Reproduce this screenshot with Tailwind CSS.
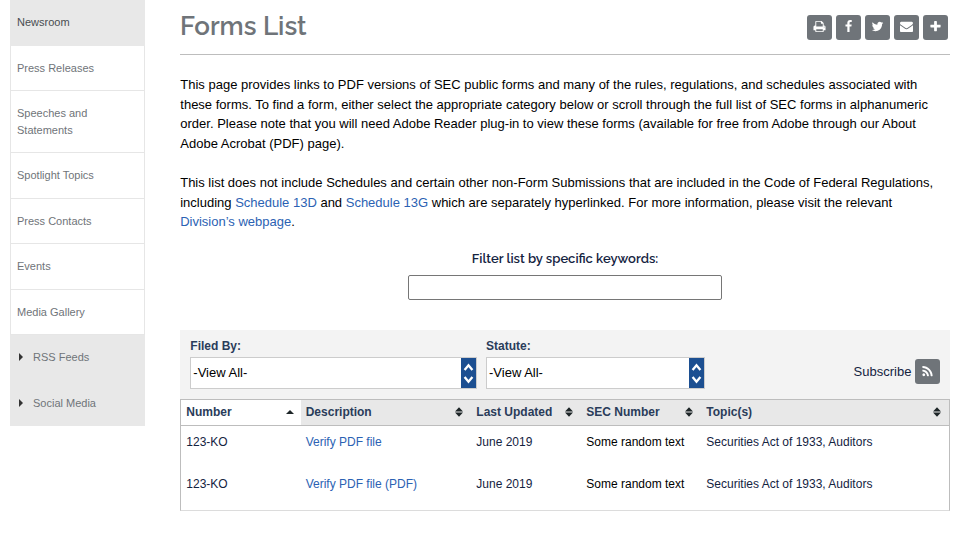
<!DOCTYPE html>
<html lang="en">
<head>
<meta charset="utf-8">
<title>Forms List</title>
<script src="https://cdn.jsdelivr.net/npm/@tailwindcss/browser@4"></script>
</head>
<body class="bg-white text-black font-['Liberation_Sans',Arial,sans-serif] text-[13px] leading-[19.5px] h-[551px] overflow-hidden">
<svg class="hidden">
  <symbol id="print" viewBox="0 0 1792 1792"><path d="M448 1536h896v-256h-896v256zm0-640h896v-384h-160q-40 0-68-28t-28-68v-160h-640v640zm1152 64q0-26-19-45t-45-19-45 19-19 45 19 45 45 19 45-19 19-45zm128 0v416q0 13-9.5 22.5t-22.5 9.5h-224v160q0 40-28 68t-68 28h-960q-40 0-68-28t-28-68v-160h-224q-13 0-22.5-9.5t-9.5-22.5v-416q0-79 56.5-135.5t135.5-56.5h64v-544q0-40 28-68t68-28h672q40 0 88 20t76 48l152 152q28 28 48 76t20 88v256h64q79 0 135.5 56.5t56.5 135.5z"/></symbol>
  <symbol id="facebook" viewBox="0 0 1792 1792"><path d="M1343 12v264h-157q-86 0-116 36t-30 108v189h293l-39 296h-254v759h-306v-759h-255v-296h255v-218q0-186 104-288.5t277-102.5q147 0 228 12z"/></symbol>
  <symbol id="twitter" viewBox="0 0 1792 1792"><path d="M1684 408q-67 98-162 167 1 14 1 42 0 130-38 259.5t-115.5 248.5-184.5 210.5-258 146-323 54.5q-271 0-496-145 35 4 78 4 225 0 401-138-105-2-188-64.5t-114-159.5q33 5 61 5 43 0 85-11-112-23-185.500-111.500t-73.500-205.500v-4q68 38 146 41-66-44-105-115t-39-154q0-88 44-163 121 149 294.500 238.500t371.500 99.500q-8-38-8-74 0-134 94.500-228.500t228.500-94.500q140 0 236 102 109-21 205-78-37 115-142 178 93-10 186-50z"/></symbol>
  <symbol id="mail" viewBox="0 0 1792 1792"><path d="M1792 710v794q0 66-47 113t-113 47h-1472q-66 0-113-47t-47-113v-794q44 49 101 87 362 246 497 345 57 42 92.5 65.5t94.5 48 110 24.5h2q51 0 110-24.5t94.5-48 92.5-65.5q170-123 498-345 57-39 100-87zm0-294q0 79-49 151t-122 123q-376 261-468 325-10 7-42.5 31t-54 38.5-52 32.5-57.5 27-50 9h-2q-23 0-50-9t-57.5-27-52-32.5-54-38.5-42.5-31q-91-64-262-182.5t-205-142.5q-62-42-117-115.5t-55-136.5q0-78 41.5-130t118.5-52h1472q65 0 112.5 47t47.5 113z"/></symbol>
  <symbol id="plus" viewBox="0 0 1792 1792"><path d="M1600 736v192q0 40-28 68t-68 28h-416v416q0 40-28 68t-68 28h-192q-40 0-68-28t-28-68v-416h-416q-40 0-68-28t-28-68v-192q0-40 28-68t68-28h416v-416q0-40 28-68t68-28h192q40 0 68 28t28 68v416h416q40 0 68 28t28 68z"/></symbol>
  <symbol id="rss" viewBox="0 0 1792 1792"><path d="M576 1344q0 80-56 136t-136 56-136-56-56-136 56-136 136-56 136 56 56 136zm512 123q2 28-17 48-18 21-47 21h-135q-25 0-43-16.5t-20-41.5q-22-229-184.5-391.5t-391.5-184.5q-25-2-41.5-20t-16.500-43v-135q0-29 21-47 17-17 43-17h5q160 13 306 80.5t259 181.5q114 113 181.5 259t80.5 306zm512 2q2 27-18 47-18 20-46 20h-143q-26 0-44.5-17.5t-19.5-42.5q-12-215-101-408.5t-231.5-336-336-231.5-408.5-102q-25-1-42.5-19.5t-17.5-43.5v-143q0-28 20-46 18-18 44-18h3q262 13 501.5 120t425.5 294q187 186 294 425.5t120 501.5z"/></symbol>
  <symbol id="sort" viewBox="0 0 8 10"><path d="M4 0.300 8 4.400H0zM0 5.600H8L4 9.700z"/></symbol>
  <symbol id="updown" viewBox="0 0 15 30"><path d="M3.600 12 7.500 7.200 11.400 12M3.600 19 7.500 23.800 11.400 19" fill="none" stroke="#fff" stroke-width="2.300"/></symbol>
</svg>
<div class="flex pl-[10px] pr-[10px]">
  <nav class="w-[135px] shrink-0 text-[11px] leading-[16.5px] text-[#6f7479]">
    <div class="bg-[#e8e8e8] h-[45.5px] pt-[14px] pl-[7px] text-[#494d51]">Newsroom</div>
    <ul class="border-x border-[#e6e6e6]">
      <li class="border-b border-[#e6e6e6] py-[14px] pl-[6px]">Press Releases</li>
      <li class="border-b border-[#e6e6e6] py-[14px] pl-[6px]">Speeches and<br>Statements</li>
      <li class="border-b border-[#e6e6e6] py-[14px] pl-[6px]">Spotlight Topics</li>
      <li class="border-b border-[#e6e6e6] py-[14px] pl-[6px]">Press Contacts</li>
      <li class="border-b border-[#e6e6e6] py-[14px] pl-[6px]">Events</li>
      <li class="border-b border-[#e6e6e6] py-[14px] pl-[6px]">Media Gallery</li>
    </ul>
    <div class="bg-[#e8e8e8]">
      <div class="flex items-center h-[45.5px] pb-px pl-[9px] gap-[10px]"><svg class="w-[4px] h-[8px] fill-[#333]" viewBox="0 0 4 8"><path d="M0 0 4 4 0 8z"/></svg>RSS Feeds</div>
      <div class="flex items-center h-[45.5px] pb-px pl-[9px] gap-[10px]"><svg class="w-[4px] h-[8px] fill-[#333]" viewBox="0 0 4 8"><path d="M0 0 4 4 0 8z"/></svg>Social Media</div>
    </div>
  </nav>
  <main class="ml-[35px] w-[770px]">
    <header class="flex justify-between items-start h-[55px] border-b border-[#bdbdbd] pr-[2px]">
      <h1 class="font-['Raleway','Lato',sans-serif] font-semibold text-[26px] leading-[34px] mt-[9px] text-[#6f7479]">Forms List</h1>
      <div class="flex gap-[4px] mt-[15px]">
        <a class="w-[25px] h-[25px] rounded-[3px] bg-[#6f7479] flex justify-center pt-[5px]"><svg class="w-[13px] h-[13px] fill-white"><use href="#print"/></svg></a>
        <a class="w-[25px] h-[25px] rounded-[3px] bg-[#6f7479] flex justify-center pt-[5px]"><svg class="w-[13px] h-[13px] fill-white"><use href="#facebook"/></svg></a>
        <a class="w-[25px] h-[25px] rounded-[3px] bg-[#6f7479] flex justify-center pt-[5px]"><svg class="w-[13px] h-[13px] fill-white"><use href="#twitter"/></svg></a>
        <a class="w-[25px] h-[25px] rounded-[3px] bg-[#6f7479] flex justify-center pt-[5px]"><svg class="w-[13px] h-[13px] fill-white"><use href="#mail"/></svg></a>
        <a class="w-[25px] h-[25px] rounded-[3px] bg-[#6f7479] flex justify-center pt-[5px]"><svg class="w-[13px] h-[13px] fill-white"><use href="#plus"/></svg></a>
      </div>
    </header>
    <p class="mt-[20px] pl-[0.3px] whitespace-nowrap">This page provides links to PDF versions of SEC public forms and many of the rules, regulations, and schedules associated with<br>these forms. To find a form, either select the appropriate category below or scroll through the full list of SEC forms in alphanumeric<br>order. Please note that you will need Adobe Reader plug-in to view these forms (available for free from Adobe through our About<br>Adobe Acrobat (PDF) page).</p>
    <p class="mt-[20px] pl-[0.2px] whitespace-nowrap">This list does not include Schedules and certain other non-Form Submissions that are included in the Code of Federal Regulations,<br>including <a class="text-[#2b62b3]">Schedule 13D</a> and <a class="text-[#2b62b3]">Schedule 13G</a> which are separately hyperlinked. For more information, please visit the relevant<br><a class="text-[#2b62b3]">Division’s webpage</a>.</p>
    <div class="flex flex-col items-center mt-[16.5px] h-[82px]">
      <label class="font-['Raleway','Lato',sans-serif] font-semibold text-[13px] leading-[20px] pt-px text-[#14233f]">Filter list by specific keywords:</label>
      <input type="text" class="mt-[6px] w-[314px] h-[25px] border border-[#767676] rounded-[2px] bg-white">
    </div>
    <section class="bg-[#f3f3f3] h-[69px] flex pl-[10px] pr-[10px] gap-[9px]">
      <div class="w-[287px] pt-[7px]">
        <div class="font-bold text-[12px] leading-[18px] pl-[0.3px] text-[#2a3c5a]">Filed By:</div>
        <div class="mt-[2px] h-[32px] border border-[#ccc] bg-white flex items-center justify-between pl-[2.3px]">-View All-<span class="w-[15px] h-[30px] bg-[#1c4f91]"><svg class="w-[15px] h-[30px]"><use href="#updown"/></svg></span></div>
      </div>
      <div class="w-[219px] pt-[7px]">
        <div class="font-bold text-[12px] leading-[18px] text-[#2a3c5a]">Statute:</div>
        <div class="mt-[2px] h-[32px] border border-[#ccc] bg-white flex items-center justify-between pl-[2px]">-View All-<span class="w-[15px] h-[30px] bg-[#1c4f91]"><svg class="w-[15px] h-[30px]"><use href="#updown"/></svg></span></div>
      </div>
      <div class="ml-auto flex gap-[3.600px] pt-[29px] text-[#14233f]">
        <span class="pt-[3px]">Subscribe</span>
        <a class="w-[25px] h-[25px] rounded-[3px] bg-[#6f7479] flex justify-center pt-[6px]"><svg class="w-[13px] h-[13px] fill-white"><use href="#rss"/></svg></a>
      </div>
    </section>
    <section class="border border-[#bdbdbd] border-b-[#dcdcdc] h-[112px] text-[12px] leading-[18px] text-[#14233f]">
      <div class="grid grid-cols-[120px_170px_110px_120px_1fr] h-[26px] border-b border-[#bdbdbd] bg-[#e8e8e8] font-bold text-[#2a3c5a]">
        <div class="bg-white flex items-center justify-between pb-px pl-[5.3px] pr-[7px]">Number<svg class="w-[8px] h-[4px] fill-[#1e2628]" viewBox="0 0 8 4"><path d="M4 0 8 4H0z"/></svg></div>
        <div class="flex items-center justify-between pb-px pl-[4.700px] pr-[8.500px]">Description<svg class="w-[8px] h-[10px] fill-[#1e2628]"><use href="#sort"/></svg></div>
        <div class="flex items-center justify-between pb-px pl-[5.300px] pr-[8.500px]">Last Updated<svg class="w-[8px] h-[10px] fill-[#1e2628]"><use href="#sort"/></svg></div>
        <div class="flex items-center justify-between pb-px pl-[5.300px] pr-[8.500px]">SEC Number<svg class="w-[8px] h-[10px] fill-[#1e2628]"><use href="#sort"/></svg></div>
        <div class="flex items-center justify-between pb-px pl-[5.300px] pr-[8.500px]">Topic(s)<svg class="w-[8px] h-[10px] fill-[#1e2628]"><use href="#sort"/></svg></div>
      </div>
      <div class="grid grid-cols-[119.4px_170.6px_110px_120px_1fr] h-[42px] pt-[7px] pl-[5.300px]">
        <div>123-KO</div><div class="text-[#2b62b3]">Verify PDF file</div><div>June 2019</div><div class="text-black">Some random text</div><div>Securities Act of 1933, Auditors</div>
      </div>
      <div class="grid grid-cols-[119.4px_170.6px_110px_120px_1fr] h-[42px] pt-[7px] pl-[5.300px]">
        <div>123-KO</div><div class="text-[#2b62b3]">Verify PDF file (PDF)</div><div>June 2019</div><div class="text-black">Some random text</div><div>Securities Act of 1933, Auditors</div>
      </div>
    </section>
  </main>
</div>
</body>
</html>
